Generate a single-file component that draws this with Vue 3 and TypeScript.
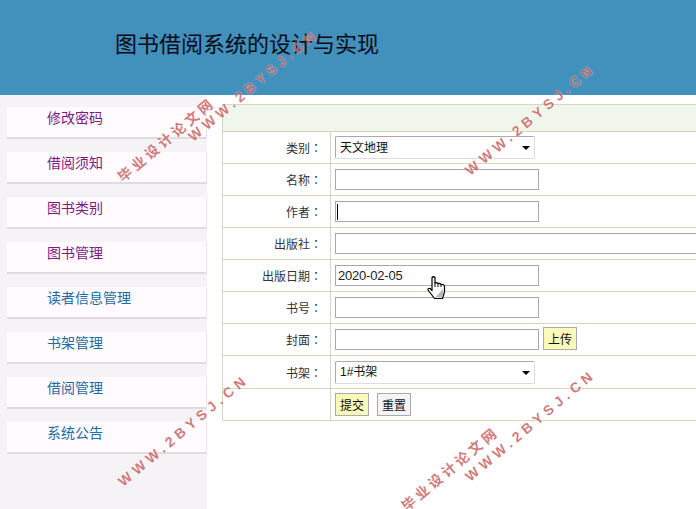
<script setup lang="ts">
const menu = [
  { label: '修改密码', tone: 'visited' },
  { label: '借阅须知', tone: 'visited' },
  { label: '图书类别', tone: 'visited' },
  { label: '图书管理', tone: 'visited' },
  { label: '读者信息管理', tone: 'link' },
  { label: '书架管理', tone: 'link' },
  { label: '借阅管理', tone: 'link' },
  { label: '系统公告', tone: 'link' },
]
const marks = [
  { x: 185, y: 132, site: 'near' },
  { x: 462, y: 166, site: '' },
  { x: 115, y: 477, site: '' },
  { x: 462, y: 472, site: 'far' },
]
</script>

<template>
  <div class="page">
    <header class="top">
      <h1>图书借阅系统的设计与实现</h1>
    </header>
    <div class="body">
      <aside class="side">
        <a v-for="m in menu" :key="m.label" href="#" class="item" :class="m.tone">{{ m.label }}</a>
      </aside>
      <main class="main">
        <table class="form">
          <colgroup>
            <col class="c1" />
            <col />
          </colgroup>
          <thead>
            <tr class="head"><th colspan="2"></th></tr>
          </thead>
          <tbody>
            <tr>
              <td class="lab">类别<span class="colon">：</span></td>
              <td class="val"><span class="sel"><select><option>天文地理</option></select></span></td>
            </tr>
            <tr>
              <td class="lab">名称<span class="colon">：</span></td>
              <td class="val"><input class="inp" type="text" /></td>
            </tr>
            <tr>
              <td class="lab">作者<span class="colon">：</span></td>
              <td class="val"><span class="caretwrap"><input class="inp" type="text" /><i class="caret"></i></span></td>
            </tr>
            <tr>
              <td class="lab">出版社<span class="colon">：</span></td>
              <td class="val"><input class="inp wide" type="text" /></td>
            </tr>
            <tr>
              <td class="lab">出版日期<span class="colon">：</span></td>
              <td class="val"><input class="inp" type="text" value="2020-02-05" /></td>
            </tr>
            <tr>
              <td class="lab">书号<span class="colon">：</span></td>
              <td class="val"><input class="inp" type="text" /></td>
            </tr>
            <tr>
              <td class="lab">封面<span class="colon">：</span></td>
              <td class="val"><input class="inp" type="text" /><button class="btn yellow upload" type="button">上传</button></td>
            </tr>
            <tr class="tall">
              <td class="lab">书架<span class="colon">：</span></td>
              <td class="val"><span class="sel"><select><option>1#书架</option></select></span></td>
            </tr>
            <tr>
              <td class="lab"></td>
              <td class="val"><button class="btn yellow" type="button">提交</button><button class="btn plain" type="button">重置</button></td>
            </tr>
          </tbody>
        </table>
      </main>
    </div>

    <svg class="hand" width="19" height="23" viewBox="0 0 19 23">
      <path d="M5 1.5 Q6.5 0 8 1.5 V7 Q10 6 11 7.5 Q13 7 14 8.5 Q16.5 8 17.5 10 V16 L15.5 22.5 H7.5 L1 14 Q0.5 12 3 12.5 L5 14.5 Z" fill="#fff" stroke="#000" stroke-width="1.2" stroke-linejoin="round" />
      <path d="M8 21.5 L16 13 L16.5 16 L15 21.5 Z" fill="#b9b9b9" />
      <path d="M8 7 V11 M11 7.5 V11 M14 8.5 V11" stroke="#000" stroke-width="1" fill="none" />
    </svg>

    <div v-for="(w, i) in marks" :key="i" class="mark" :style="{ left: w.x + 'px', top: w.y + 'px' }">
      <div class="www">WWW.2BYSJ.CN</div>
      <div v-if="w.site" class="site" :class="w.site">毕业设计论文网</div>
    </div>
  </div>
</template>

<style scoped>
.page {
  position: relative;
  width: 696px;
  height: 509px;
  overflow: hidden;
  background: #fff;
  font-family: "Liberation Sans", "Noto Sans CJK SC", sans-serif;
  font-size: 12px;
  color: #222;
}
.top {
  height: 95px;
  background: #4290bc;
  padding-left: 115px;
  box-sizing: border-box;
}
.top h1 {
  margin: 0;
  padding-top: 31px;
  font-size: 22px;
  line-height: 28px;
  font-weight: 400;
  color: #0a0a14;
}
.body {
  display: flex;
  height: 414px;
}
.side {
  width: 207px;
  flex: none;
  background: #f6f3f7;
  box-sizing: border-box;
  padding: 12px 0 0 7px;
  display: flex;
  flex-direction: column;
  gap: 13px;
}
.item {
  display: block;
  height: 32px;
  box-sizing: border-box;
  padding-left: 40px;
  background: #fffbff;
  border-bottom: 2px solid #dedcde;
  border-right: 1px solid #e6e4e6;
  font-size: 14px;
  line-height: 22px;
  text-decoration: none;
}
.item.visited { color: #7b1a80; }
.item.link { color: #1f6a9e; }
.main {
  flex: 1;
  padding: 9px 0 0 15px;
  min-width: 0;
}
.form {
  width: 520px;
  border-collapse: collapse;
  table-layout: fixed;
}
.c1 { width: 108px; }
.form th,
.form td {
  border: 1px solid #d4d8b9;
  padding: 0;
}
.head th {
  height: 26px;
  background: #f0f6ec;
}
.form td { height: 31px; }
.form tr.tall td { height: 32px; }
.lab {
  padding-right: 8px !important;
  text-align: right;
  color: #333;
  white-space: nowrap;
}
.colon { font-family: "Noto Sans CJK TC", sans-serif; }
.val {
  padding-left: 4px !important;
  white-space: nowrap;
}
.inp {
  display: inline-block;
  vertical-align: middle;
  width: 204px;
  height: 21px;
  box-sizing: border-box;
  border: 1px solid #a9a9a9;
  padding: 0 2px;
  font: 13px "Liberation Sans", sans-serif;
  letter-spacing: -0.2px;
  color: #222;
  background: #fff;
  outline: none;
}
.wide { width: 420px; }
.caretwrap {
  position: relative;
  display: inline-block;
}
.caret {
  position: absolute;
  left: 2px;
  top: 3px;
  width: 1px;
  height: 16px;
  background: #000;
}
.sel {
  position: relative;
  display: inline-block;
  vertical-align: middle;
}
.sel select {
  display: block;
  appearance: none;
  width: 200px;
  height: 23px;
  box-sizing: border-box;
  padding: 0 0 0 4px;
  background: #fff;
  border: 1px solid #ddd;
  border-top-color: #aaa;
  border-left-color: #aaa;
  border-radius: 2px;
  font: 12px "Liberation Sans", "Noto Sans CJK SC", sans-serif;
  color: #111;
}
.sel::after {
  content: "";
  position: absolute;
  right: 5px;
  top: 10px;
  border: 4px solid transparent;
  border-top: 4px solid #000;
  border-bottom: 0;
}
.btn {
  display: inline-block;
  vertical-align: middle;
  width: 34px;
  height: 23px;
  box-sizing: border-box;
  border: 1px solid #aaa;
  padding: 0;
  font: 12px "Noto Sans CJK SC", sans-serif;
  color: #111;
}
.yellow { background: #fbfbb9; }
.plain { background: #f6f3f7; margin-left: 8px; }
.upload { margin: -3px 0 0 4px; }
.hand {
  position: absolute;
  left: 427px;
  top: 276px;
}
.mark {
  position: absolute;
  width: 180px;
  transform: rotate(-40deg);
  transform-origin: 0 0;
  pointer-events: none;
  color: rgba(190, 72, 72, 0.72);
  font-weight: 700;
  text-shadow: 0 0 2px rgba(255, 255, 255, 0.7);
}
.www {
  font-size: 14px;
  line-height: 16px;
  letter-spacing: 4.5px;
  white-space: nowrap;
}
.site {
  font-size: 14px;
  line-height: 20px;
  letter-spacing: 3.4px;
  white-space: nowrap;
}
.site.near { transform: translate(-80px, -32px); }
.site.far { transform: translate(-68px, -36px); }
</style>
